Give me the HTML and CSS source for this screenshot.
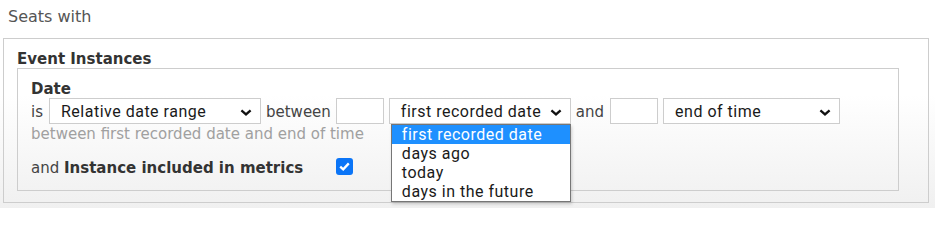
FILE: index.html
```html
<!DOCTYPE html>
<html>
<head>
<meta charset="utf-8">
<link rel="stylesheet" href="styles.css">
</head>
<body>
<div class="page">
  <div class="title">Seats with</div>
  <div class="outer">
    <div class="legend">Event Instances</div>
    <div class="inner">
      <div class="sub">Date</div>
      <div class="row">
        <span class="lbl lbl-is">is</span>
        <div class="select sel-type"><span>Relative date range</span>
          <svg class="chev" width="12" height="7" viewBox="0 0 12 7"><polyline points="1.4,1.3 6,5.4 10.6,1.3" fill="none" stroke="#111" stroke-width="2.3"/></svg>
        </div>
        <span class="lbl">between</span>
        <div class="input"></div>
        <div class="select sel-from"><span>first recorded date</span>
          <svg class="chev" width="12" height="7" viewBox="0 0 12 7"><polyline points="1.4,1.3 6,5.4 10.6,1.3" fill="none" stroke="#111" stroke-width="2.3"/></svg>
          <ul class="menu">
            <li class="active">first recorded date</li>
            <li>days ago</li>
            <li>today</li>
            <li>days in the future</li>
          </ul>
        </div>
        <span class="lbl lbl-and">and</span>
        <div class="input"></div>
        <div class="select sel-to"><span>end of time</span>
          <svg class="chev" width="12" height="7" viewBox="0 0 12 7"><polyline points="1.4,1.3 6,5.4 10.6,1.3" fill="none" stroke="#111" stroke-width="2.3"/></svg>
        </div>
      </div>
      <div class="hint">between first recorded date and end of time</div>
      <div class="row2">
        <span class="flag-label">and <b>Instance included in metrics</b></span>
        <span class="check">
          <svg width="11" height="9" viewBox="0 0 11 9"><polyline points="1.2,4.6 4.2,7.4 9.8,1.4" fill="none" stroke="#fff" stroke-width="2.3"/></svg>
        </span>
      </div>
    </div>
  </div>
</div>
</body>
</html>
```
FILE: styles.css
```css
html, body {
  margin: 0;
  padding: 0;
}
body {
  font-family: "DejaVu Sans", Verdana, sans-serif;
  color: #333;
  width: 935px;
  height: 208px;
  overflow: hidden;
  background: linear-gradient(to bottom, #fff 0px, #fff 95px, #f0f0f0 208px);
}
.page {
  height: 208px;
}
.title {
  font-size: 16px;
  line-height: 18px;
  color: #555;
  padding: 8px 0 0 8px;
  height: 30px;
}
.outer {
  margin-left: 3px;
  width: 926px;
  box-sizing: border-box;
  border: 1px solid #cdcdcd;
  padding: 12px 0 11px 13px;
}
.legend {
  font-size: 15px;
  font-weight: bold;
  line-height: 17px;
  color: #333;
}
.inner {
  width: 882px;
  box-sizing: border-box;
  border: 1px solid #cdcdcd;
  padding: 12px 0 13px 13px;
}
.sub {
  font-size: 15px;
  font-weight: bold;
  line-height: 17px;
  color: #333;
}
.row {
  display: flex;
  align-items: center;
  gap: 5px;
  height: 26px;
  font-size: 15px;
}
.lbl {
  color: #444;
  line-height: 17px;
  margin-top: 3px;
}
.lbl-is {
  margin-right: 1px;
}
.lbl-and {
  margin-right: 1px;
}
.input {
  width: 48px;
  height: 26px;
  box-sizing: border-box;
  border: 1px solid #cdcdcd;
  background: #fff;
}
.select {
  position: relative;
  height: 26px;
  box-sizing: border-box;
  border: 1px solid #cdcdcd;
  background: #fff;
  display: flex;
  align-items: center;
  justify-content: space-between;
  padding: 2px 8px 0 11px;
  font-family: Roboto, "Open Sans", sans-serif;
  font-size: 16px;
  letter-spacing: 0.5px;
  color: #1a1a1a;
}
.select span {
  line-height: 20px;
}
.sel-type { width: 212px; }
.sel-from { width: 182px; }
.sel-to { width: 177px; }
.chev {
  display: block;
}
.menu {
  position: absolute;
  left: 1px;
  top: 25px;
  width: 180px;
  box-sizing: border-box;
  margin: 0;
  padding: 0;
  list-style: none;
  background: #fff;
  border: 1px solid #767676;
  box-shadow: 1px 2px 3px rgba(0,0,0,0.18);
  z-index: 5;
}
.menu li {
  height: 19px;
  line-height: 19px;
  padding-left: 10px;
  color: #1a1a1a;
  white-space: nowrap;
}
.menu li.active {
  background: #1e90ff;
  color: #fff;
}
.hint {
  margin-top: 2px;
  font-size: 15px;
  line-height: 17px;
  color: #a0a0a0;
}
.row2 {
  margin-top: 17px;
  display: flex;
  align-items: flex-start;
  font-size: 15px;
  line-height: 17px;
  color: #444;
}
.flag-label {
  width: 305px;
}
.flag-label b {
  color: #333;
}
.check {
  margin-top: -2px;
  width: 17px;
  height: 17px;
  border-radius: 3px;
  background: #0b75f7;
  display: flex;
  align-items: center;
  justify-content: center;
}
.check svg {
  display: block;
}
```
